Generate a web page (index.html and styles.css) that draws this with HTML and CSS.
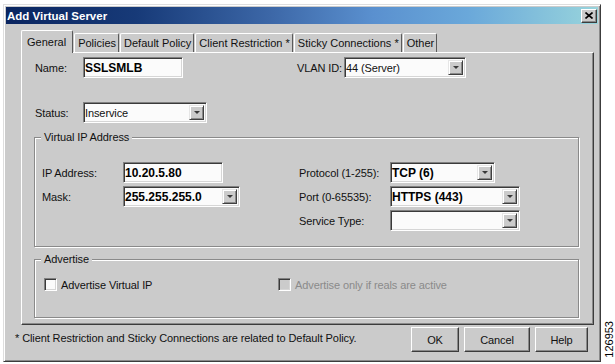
FILE: index.html
```html
<!DOCTYPE html>
<html lang="en">
<head>
  <meta charset="UTF-8">
  <title>Add Virtual Server</title>
  <link rel="stylesheet" href="styles.css">
</head>
<body>
  <div class="dialog">
    <div class="titlebar">
      <span class="title">Add Virtual Server</span>
      <span class="close">
        <svg width="8" height="7" viewBox="0 0 8 7"><path d="M0.5 0.5l7 6M7.5 0.5l-7 6" stroke="#000" stroke-width="1.6" fill="none"/></svg>
      </span>
    </div>

    <div class="tabs">
      <span class="tab selected">General</span>
      <span class="tab">Policies</span>
      <span class="tab">Default Policy</span>
      <span class="tab">Client Restriction *</span>
      <span class="tab">Sticky Connections *</span>
      <span class="tab">Other</span>
    </div>

    <div class="panel">
      <div class="top-row">
        <div class="field">
          <label class="lbl">Name:</label>
          <div class="textbox w100 strong">SSLSMLB</div>
        </div>
        <div class="field">
          <label class="lbl vlan">VLAN ID:</label>
          <div class="combo w122"><span class="value">44 (Server)</span><span class="drop"><i></i></span></div>
        </div>
      </div>

      <div class="field status-row">
        <label class="lbl">Status:</label>
        <div class="combo w124"><span class="value">Inservice</span><span class="drop"><i></i></span></div>
      </div>

      <fieldset class="group vip">
        <legend>Virtual IP Address</legend>
        <div class="vip-grid">
          <label>IP Address:</label>
          <div class="textbox w100 strong">10.20.5.80</div>
          <label>Protocol (1-255):</label>
          <div class="combo w105"><span class="value strong">TCP (6)</span><span class="drop"><i></i></span></div>

          <label>Mask:</label>
          <div class="combo w117"><span class="value strong">255.255.255.0</span><span class="drop"><i></i></span></div>
          <label>Port (0-65535):</label>
          <div class="combo w130"><span class="value strong">HTTPS (443)</span><span class="drop"><i></i></span></div>

          <span></span>
          <span></span>
          <label>Service Type:</label>
          <div class="combo w130"><span class="value"></span><span class="drop"><i></i></span></div>
        </div>
      </fieldset>

      <fieldset class="group adv">
        <legend>Advertise</legend>
        <div class="checks">
          <label class="check"><span class="box"></span>Advertise Virtual IP</label>
          <label class="check disabled"><span class="box"></span>Advertise only if reals are active</label>
        </div>
      </fieldset>
    </div>

    <div class="footer">
      <p class="note">* Client Restriction and Sticky Connections are related to Default Policy.</p>
      <div class="buttons">
        <span class="btn ok">OK</span>
        <span class="btn cancel">Cancel</span>
        <span class="btn help">Help</span>
      </div>
    </div>
  </div>

  <div class="figno">126953</div>
</body>
</html>
```

FILE: styles.css
```css
html, body {
  margin: 0;
  padding: 0;
  background: #fff;
  width: 615px;
  height: 364px;
  overflow: hidden;
}

body {
  display: flex;
  padding: 4px 0 0 3px;
  box-sizing: border-box;
  font-family: "Liberation Sans", Arial, sans-serif;
  font-size: 11px;
  letter-spacing: -0.1px;
  color: #111;
}

.dialog {
  width: 598px;
  height: 358px;
  box-sizing: border-box;
  background: #cbcbcb;
  border: 1px solid;
  border-color: #dedede #3c3c3c #3c3c3c #dedede;
  box-shadow: inset 1px 1px 0 #fff, inset -1px -1px 0 #8a8a8a;
  padding: 2px 2px 0 2px;
  display: flex;
  flex-direction: column;
}

.titlebar {
  height: 17px;
  display: flex;
  align-items: center;
  justify-content: space-between;
  padding: 0 1px 0 1px;
  background: linear-gradient(to right, #0a2560 0%, #173a78 22%, #3d68a8 45%, #5a90cf 62%, #6aa8da 78%, #98d4dc 100%);
}

.title {
  color: #fff;
  font-weight: bold;
  font-size: 11.5px;
  letter-spacing: 0;
}

.close {
  width: 16px;
  height: 14px;
  box-sizing: border-box;
  background: #cbcbcb;
  border: 1px solid;
  border-color: #fff #3c3c3c #3c3c3c #fff;
  box-shadow: inset -1px -1px 0 #8a8a8a;
  display: flex;
  align-items: center;
  justify-content: center;
}

.tabs {
  display: flex;
  align-items: flex-end;
  height: 22px;
  margin: 6px 0 0 15px;
  position: relative;
  z-index: 1;
  letter-spacing: 0;
}

.tab {
  height: 19px;
  line-height: 19px;
  padding: 0 2px 0 3px;
  margin-left: 1px;
  box-sizing: border-box;
  border-left: 1px solid #fff;
  border-top: 1px solid #fff;
  border-right: 1px solid #5a5a5a;
  border-radius: 2px 2px 0 0;
  white-space: nowrap;
}

.tab.selected {
  height: 23px;
  line-height: 22px;
  margin: 0 0 -1px 0;
  padding: 0 6px 0 5px;
  background: #cbcbcb;
}

.panel {
  height: 273px;
  margin: 0 4px 0 15px;
  box-sizing: border-box;
  border: 1px solid;
  border-color: #fff #3c3c3c #3c3c3c #fff;
  box-shadow: inset -1px -1px 0 #8a8a8a;
  padding: 4px 10px 0 13px;
}

.top-row {
  display: grid;
  grid-template-columns: 262px auto;
}

.field {
  display: flex;
  align-items: center;
  height: 21px;
}

.lbl {
  width: 48px;
}

.lbl.vlan {
  width: 47px;
}

.status-row {
  margin-top: 24px;
}

.textbox,
.combo {
  height: 21px;
  box-sizing: border-box;
  background: #fbfbfb;
  border: 1px solid;
  border-color: #808080 #fff #fff #808080;
  box-shadow: inset 1px 1px 0 #3a3a3a, inset -1px -1px 0 #d6d6d6;
  padding: 0 0 0 1px;
  display: flex;
  align-items: center;
  white-space: nowrap;
}

.combo {
  justify-content: space-between;
  padding-right: 2px;
}

.strong {
  font-weight: bold;
  font-size: 12px;
  letter-spacing: 0;
  color: #000;
}

.w100 { width: 100px; }
.w105 { width: 105px; }
.w117 { width: 117px; }
.w122 { width: 122px; }
.w124 { width: 124px; }
.w130 { width: 130px; }

.drop {
  width: 15px;
  height: 15px;
  box-sizing: border-box;
  background: #cbcbcb;
  border: 1px solid;
  border-color: #e6e6e6 #404040 #404040 #e6e6e6;
  box-shadow: inset 1px 1px 0 #fff, inset -1px -1px 0 #8a8a8a;
  display: flex;
  align-items: center;
  justify-content: center;
}

.drop i {
  width: 0;
  height: 0;
  border-left: 3px solid transparent;
  border-right: 3px solid transparent;
  border-top: 3px solid #3a3a3a;
}

.group {
  margin: 0 0 0 -1px;
  width: 545px;
  box-sizing: border-box;
  border: 1px solid #8a8a8a;
  box-shadow: inset 1px 1px 0 #fff, 1px 1px 0 #fff;
  padding: 0;
}

.group legend {
  margin-left: 6px;
  padding: 0 3px;
  line-height: 13px;
  background: #cbcbcb;
}

.vip {
  margin-top: 8px;
  padding: 18px 0 15px 0;
}

.vip-grid {
  display: grid;
  grid-template-columns: 81px 176px 91px auto;
  grid-auto-rows: 21px;
  row-gap: 3px;
  align-items: center;
  padding-left: 7px;
}

.adv {
  margin-top: 6px;
  height: 65px;
  padding: 12px 0 0 0;
}

.checks {
  display: grid;
  grid-template-columns: 234px auto;
  padding-left: 9px;
}

.check {
  display: flex;
  align-items: center;
  height: 13px;
}

.check .box {
  width: 13px;
  height: 13px;
  box-sizing: border-box;
  margin-right: 4px;
  background: #fbfbfb;
  border: 1px solid;
  border-color: #808080 #fff #fff #808080;
  box-shadow: inset 1px 1px 0 #3a3a3a, inset -1px -1px 0 #d6d6d6;
}

.check.disabled {
  color: #8a8a8a;
}

.check.disabled .box {
  background: #cbcbcb;
}

.footer {
  display: flex;
  justify-content: space-between;
  align-items: flex-start;
  padding: 2px 10px 0 9px;
}

.note {
  margin: 0;
  padding-top: 5px;
  line-height: 13px;
}

.buttons {
  display: flex;
  gap: 5px;
}

.btn {
  height: 25px;
  box-sizing: border-box;
  border: 1px solid;
  border-color: #fff #3c3c3c #3c3c3c #fff;
  box-shadow: inset -1px -1px 0 #8a8a8a;
  display: flex;
  align-items: center;
  justify-content: center;
}

.btn.ok { width: 48px; }
.btn.cancel { width: 66px; }
.btn.help { width: 53px; }

.figno {
  align-self: flex-end;
  margin: 0 0 6px 3px;
  writing-mode: vertical-rl;
  transform: rotate(180deg);
  line-height: 11px;
  font-size: 11px;
  letter-spacing: 0;
  color: #000;
}
```
